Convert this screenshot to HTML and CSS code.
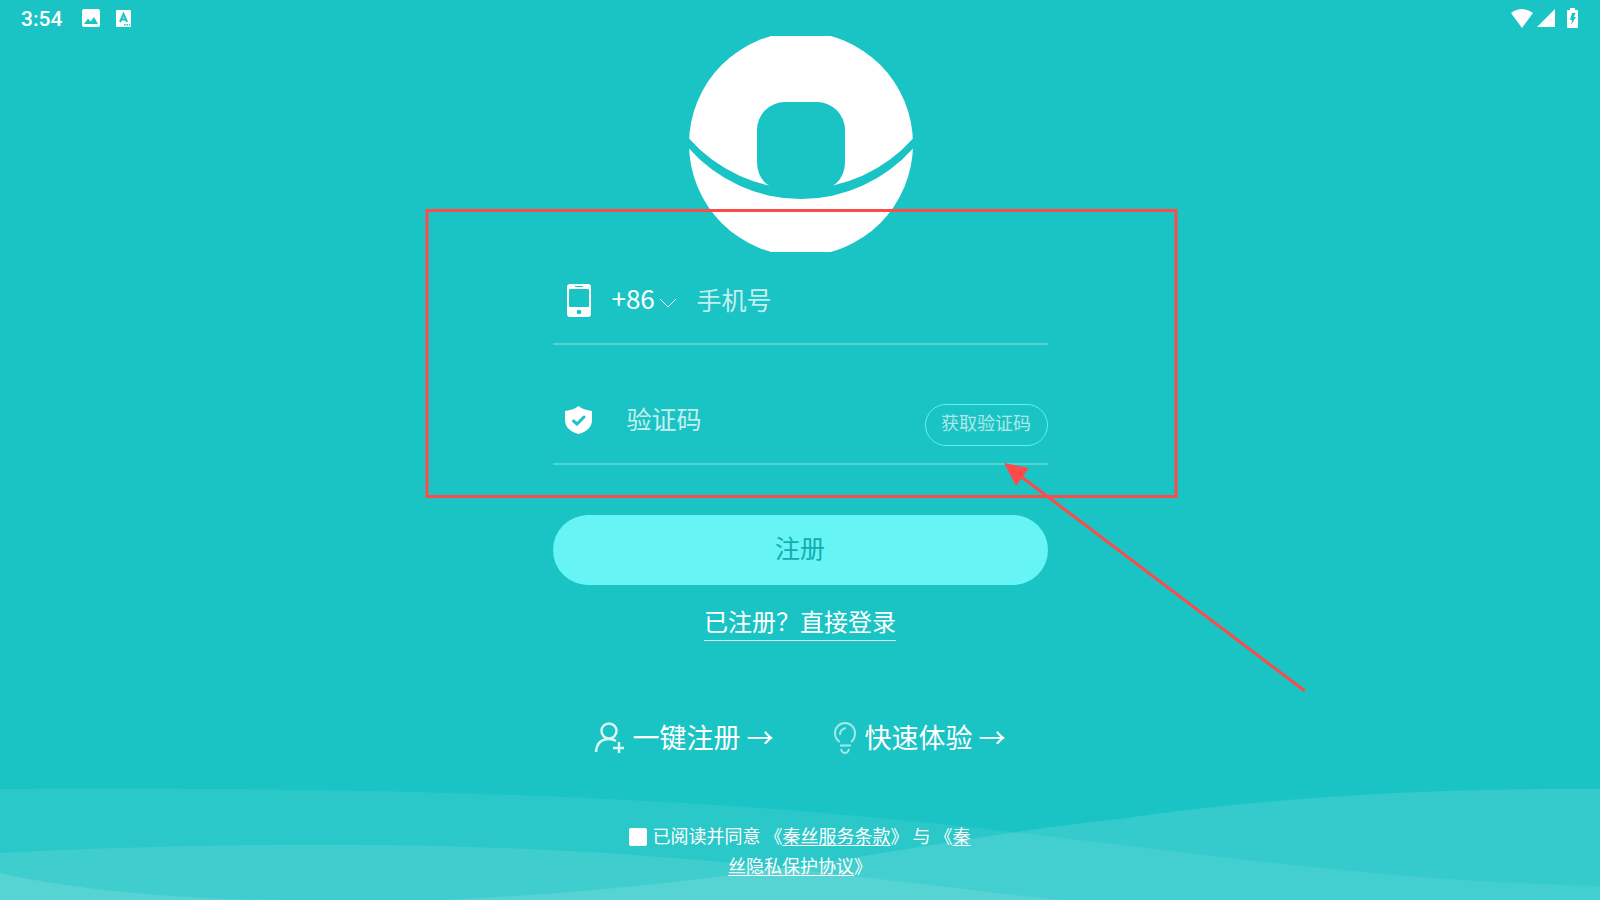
FILE: index.html
```
<!DOCTYPE html>
<html lang="zh-CN">
<head>
  <meta charset="UTF-8">
  <meta name="viewport" content="width=device-width, initial-scale=1">
  <title>注册</title>
  <link rel="stylesheet" href="styles.css">
</head>
<body>
  <svg class="waves" viewBox="0 0 1600 112" preserveAspectRatio="none" aria-hidden="true">
    <path class="wave-back" d="M0 1C300 -1 550 4 800 23C1100 47 1310 91 1600 98V112H0Z"/>
    <path class="wave-right" d="M0 85C80 103 190 112 290 112H440C760 98 930 50 1120 31C1270 9 1430 0 1600 1V112H0Z"/>
    <path class="wave-front" d="M0 65C180 55 400 54 550 62C740 71 880 92 1060 112H0Z"/>
  </svg>

  <header class="status-bar">
    <span class="clock">3:54</span>
    <svg class="status-image" width="18" height="18" viewBox="0 0 18 18" aria-hidden="true">
      <rect width="18" height="18" rx="2" fill="#fff"/>
      <path class="cut" d="M2 15L6 9.500L8.500 12.500L12 8L16 15Z"/>
    </svg>
    <svg class="status-lang" width="15" height="17" viewBox="0 0 15 17" aria-hidden="true">
      <rect width="15" height="17" rx="1" fill="#fff"/>
      <path d="M4 12L7.500 4L11 12M5.500 9.500H9.500" fill="none" stroke="#1ac4c5" stroke-width="2"/>
      <path class="cut" d="M8 14h1.500v1.500H8zM10.500 14H12v1.500h-1.500zM13 14h1v1.500h-1z"/>
    </svg>
    <span class="spacer"></span>
    <svg width="22" height="19" viewBox="0 0 22 19" aria-hidden="true">
      <path d="M0 4Q11 -4 22 4L11 19Z" fill="#fff"/>
    </svg>
    <svg width="18" height="18" viewBox="0 0 18 18" aria-hidden="true">
      <path d="M18 0V18H0Z" fill="#fff"/>
    </svg>
    <svg class="battery" width="11" height="20" viewBox="0 0 11 20" aria-hidden="true">
      <path d="M3 0H8V2H10Q11 2 11 3V19Q11 20 10 20H1Q0 20 0 19V3Q0 2 1 2H3Z" fill="#fff"/>
      <path class="cut" d="M5 5H8.500L7 9H9L4 17L5 12H3Z"/>
    </svg>
  </header>

  <main class="register">
    <svg class="logo" width="224" height="216" viewBox="0 0 224 216" role="img" aria-label="秦丝">
      <circle cx="112" cy="108" r="112" fill="#fff"/>
      <rect class="cut" x="68" y="66" width="88" height="89" rx="28"/>
      <path class="cut" d="M0 102.500A149.500 149.500 0 0 0 224 102.500V112.500A149.500 149.500 0 0 1 0 112.500Z"/>
    </svg>

    <form class="form" onsubmit="return false">
      <div class="row row-phone">
        <svg class="row-icon" width="28" height="34" viewBox="0 0 28 34" aria-hidden="true">
          <rect x="2" y="0" width="24" height="33" rx="3" fill="#fff"/>
          <rect class="cut" x="4" y="5" width="20" height="18" rx="1"/>
          <rect class="cut" x="10" y="2" width="8" height="1"/>
          <circle class="cut" cx="14" cy="28" r="2.300"/>
        </svg>
        <select class="area-code" aria-label="国家区号">
          <option>+86</option>
        </select>
        <svg class="chevron" width="16" height="9" viewBox="0 0 16 9" aria-hidden="true">
          <path d="M0 0L8 8L16 0" fill="none" stroke="#fff"/>
        </svg>
        <input type="tel" class="field" placeholder="手机号" aria-label="手机号">
      </div>

      <div class="row row-code">
        <svg class="row-icon" width="28" height="28" viewBox="0 0 28 28" aria-hidden="true">
          <path d="M13.500 0Q18 4 27 5V14Q27 24 13.500 28Q0 24 0 14V5Q9 4 13.500 0Z" fill="#fff"/>
          <path d="M8.500 15L12 18L19 11" fill="none" stroke="#1ac4c5" stroke-width="3" stroke-linecap="round"/>
        </svg>
        <input type="text" class="field" placeholder="验证码" aria-label="验证码">
        <button type="button" class="get-code">获取验证码</button>
      </div>

      <button type="submit" class="submit">注册</button>
    </form>

    <a class="login-link" href="#login">已注册？直接登录</a>

    <nav class="shortcuts">
      <a href="#quick">
        <svg width="30" height="32" viewBox="0 0 30 32" fill="none" stroke="#fff" stroke-width="2.500" aria-hidden="true">
          <g opacity=".85">
            <circle cx="15" cy="9" r="7.500"/>
            <path d="M2 30Q3 17 15 17Q19 17 22 19M25 20V31M19 26H30"/>
          </g>
        </svg>
        一键注册 →
      </a>
      <a href="#try">
        <svg width="23" height="32" viewBox="0 0 23 32" fill="none" stroke="#fff" stroke-width="2" aria-hidden="true">
          <g opacity=".6">
            <path d="M6 20Q1 17 1 11A10 10 0 0 1 21 11Q21 17 17 20M6 23.500H17M7 27Q8 31 11 31Q14 31 15 27M6 13Q6 7 12 6"/>
          </g>
        </svg>
        快速体验 →
      </a>
    </nav>

    <p class="terms">
      <input type="checkbox" id="agree" class="agree"><label for="agree">已阅读并同意</label> 《<a href="#terms">秦丝服务条款</a>》 与 《<a href="#privacy">秦丝隐私保护协议</a>》
    </p>
  </main>

  <!-- highlight box and pointer over the form -->
  <svg class="marks" width="880" height="484" viewBox="0 0 880 484" aria-hidden="true">
    <rect x="2" y="1.500" width="749" height="286" fill="none" stroke="#ff4a4a" stroke-width="3"/>
    <path d="M594 266L880 482" stroke="#ff4a4a" stroke-width="3"/>
    <path d="M579 254L604 259L591 277Z" fill="#ff4a4a"/>
  </svg>
</body>
</html>
```
FILE: styles.css
```
* {
  box-sizing: border-box;
}
body {
  margin: 0;
  min-height: 100vh;
  position: relative;
  overflow-x: hidden;
  background-color: #1ac4c5;
  color: #fff;
  font-family: "Noto Sans CJK SC", sans-serif;
}
a {
  color: inherit;
}
svg {
  display: block;
  flex: none;
}
.cut {
  fill: #1ac4c5;
}

/* bottom waves */
.waves {
  position: absolute;
  left: 0;
  bottom: 0;
  width: 100%;
  height: 112px;
}
.wave-back {
  fill: rgba(255, 255, 255, 0.07);
}
.wave-right {
  fill: rgba(255, 255, 255, 0.12);
}
.wave-front {
  fill: rgba(255, 255, 255, 0.1);
}

/* status bar */
.status-bar {
  display: flex;
  align-items: center;
  height: 36px;
  padding: 0 22px 0 21px;
  gap: 4px;
  font-family: Roboto, sans-serif;
}
.clock {
  padding-top: 1px;
  font-size: 21px;
  font-weight: 500;
}
.status-image {
  margin-left: 16px;
}
.status-lang {
  margin-left: 12px;
}
.spacer {
  flex: 1;
}
.battery {
  margin-left: 8px;
}

/* register form */
.register {
  position: relative;
  display: flex;
  flex-direction: column;
  align-items: center;
}
.logo {
  margin-left: 2px;
}
.form {
  width: 100%;
  max-width: 495px;
}
.row {
  display: flex;
  align-items: center;
  padding-left: 12px;
  border-bottom: 2px solid rgba(255, 255, 255, 0.25);
}
.row-phone {
  height: 93px;
  padding-top: 6px;
}
.row-code {
  height: 120px;
  padding-top: 32px;
}
.area-code {
  appearance: none;
  width: 48px;
  margin-left: 19px;
  padding: 0 0 7px;
  border: 0;
  background: none;
  color: #fff;
  font-family: inherit;
  font-size: 26px;
}
.chevron {
  margin-top: 6px;
}
.field {
  flex: 1;
  min-width: 0;
  padding: 0 0 4px;
  border: 0;
  outline: none;
  background: none;
  color: #fff;
  font-family: inherit;
  font-size: 25px;
}
.field::placeholder {
  color: rgba(255, 255, 255, 0.75);
}
.row-phone .field {
  margin-left: 21px;
}
.row-code .field {
  margin-left: 34px;
}
.get-code {
  width: 123px;
  height: 42px;
  margin-top: 10px;
  padding: 0 0 6px;
  border: 1px solid #5ef0f0;
  border-radius: 21px;
  background: none;
  color: rgba(255, 255, 255, 0.65);
  font-family: inherit;
  font-size: 18px;
}
.submit {
  display: block;
  width: 100%;
  height: 70px;
  margin-top: 50px;
  padding: 0 0 6px;
  border: 0;
  border-radius: 35px;
  background-color: #66f4f5;
  color: #12adae;
  font-family: inherit;
  font-size: 25px;
}
.login-link {
  margin-top: 18px;
  padding-bottom: 2px;
  border-bottom: 1px solid rgba(255, 255, 255, 0.8);
  font-size: 24px;
  line-height: 35px;
  text-decoration: none;
}
.shortcuts {
  display: flex;
  gap: 60px;
  margin-top: 76px;
}
.shortcuts a {
  display: flex;
  align-items: center;
  gap: 8px;
  font-size: 27px;
  line-height: 40px;
  text-decoration: none;
}
.shortcuts svg {
  margin-top: 2px;
}
.terms {
  max-width: 350px;
  margin: 63px 0 20px;
  font-size: 18px;
  line-height: 30px;
  text-align: center;
}
.terms a {
  text-underline-offset: 2px;
}
.agree {
  appearance: none;
  width: 18px;
  height: 18px;
  margin: 0 5px 0 0;
  border-radius: 2px;
  background-color: #fff;
  vertical-align: -3px;
}
.agree:checked {
  background-color: #66f4f5;
}

.marks {
  position: absolute;
  top: 209px;
  left: calc(50% - 375px);
  pointer-events: none;
}
```
